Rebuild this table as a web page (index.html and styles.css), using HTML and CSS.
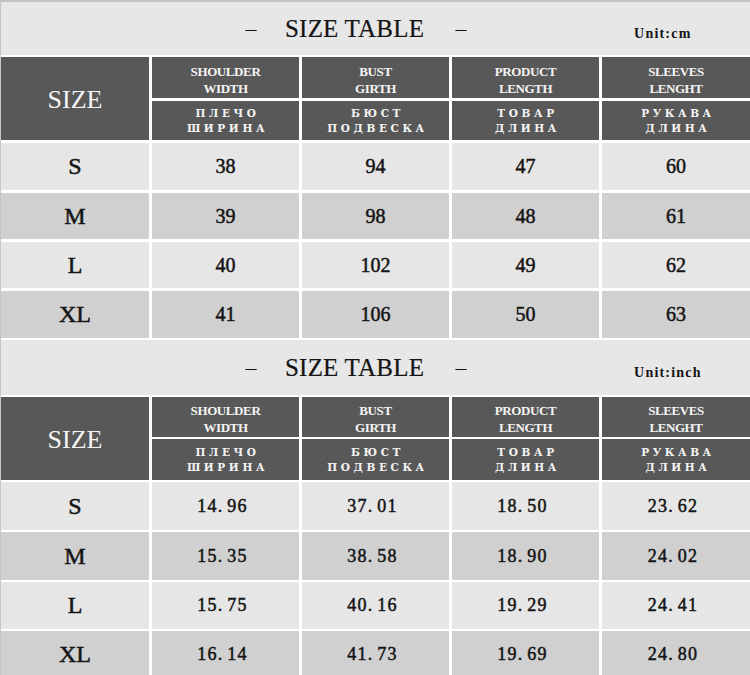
FILE: index.html
```html
<!DOCTYPE html>
<html lang="en">
<head>
<meta charset="utf-8">
<title>Size Table</title>
<link rel="stylesheet" href="styles.css">
</head>
<body>
<div class="page">
  <section class="block block-cm">
    <div class="title-row">
      <span class="dash">–</span>
      <span class="title">SIZE TABLE</span>
      <span class="dash">–</span>
      <span class="unit">Unit:cm</span>
    </div>
    <div class="grid grid-cm">
      <div class="cell head size-head">SIZE</div>
      <div class="cell head en">SHOULDER<br>WIDTH</div>
      <div class="cell head en">BUST<br>GIRTH</div>
      <div class="cell head en">PRODUCT<br>LENGTH</div>
      <div class="cell head en">SLEEVES<br>LENGHT</div>
      <div class="cell head ru">ПЛЕЧО<br>ШИРИНА</div>
      <div class="cell head ru">БЮСТ<br>ПОДВЕСКА</div>
      <div class="cell head ru">ТОВАР<br>ДЛИНА</div>
      <div class="cell head ru">РУКАВА<br>ДЛИНА</div>

      <div class="cell light size">S</div>
      <div class="cell light num">38</div>
      <div class="cell light num">94</div>
      <div class="cell light num">47</div>
      <div class="cell light num">60</div>

      <div class="cell dark size">M</div>
      <div class="cell dark num">39</div>
      <div class="cell dark num">98</div>
      <div class="cell dark num">48</div>
      <div class="cell dark num">61</div>

      <div class="cell light size">L</div>
      <div class="cell light num">40</div>
      <div class="cell light num">102</div>
      <div class="cell light num">49</div>
      <div class="cell light num">62</div>

      <div class="cell dark size">XL</div>
      <div class="cell dark num">41</div>
      <div class="cell dark num">106</div>
      <div class="cell dark num">50</div>
      <div class="cell dark num">63</div>
    </div>
  </section>

  <section class="block block-inch">
    <div class="title-row">
      <span class="dash">–</span>
      <span class="title">SIZE TABLE</span>
      <span class="dash">–</span>
      <span class="unit">Unit:inch</span>
    </div>
    <div class="grid grid-inch">
      <div class="cell head size-head">SIZE</div>
      <div class="cell head en">SHOULDER<br>WIDTH</div>
      <div class="cell head en">BUST<br>GIRTH</div>
      <div class="cell head en">PRODUCT<br>LENGTH</div>
      <div class="cell head en">SLEEVES<br>LENGHT</div>
      <div class="cell head ru">ПЛЕЧО<br>ШИРИНА</div>
      <div class="cell head ru">БЮСТ<br>ПОДВЕСКА</div>
      <div class="cell head ru">ТОВАР<br>ДЛИНА</div>
      <div class="cell head ru">РУКАВА<br>ДЛИНА</div>

      <div class="cell light size">S</div>
      <div class="cell light dec">14<span class="pt">.</span>96</div>
      <div class="cell light dec">37<span class="pt">.</span>01</div>
      <div class="cell light dec">18<span class="pt">.</span>50</div>
      <div class="cell light dec">23<span class="pt">.</span>62</div>

      <div class="cell dark size">M</div>
      <div class="cell dark dec">15<span class="pt">.</span>35</div>
      <div class="cell dark dec">38<span class="pt">.</span>58</div>
      <div class="cell dark dec">18<span class="pt">.</span>90</div>
      <div class="cell dark dec">24<span class="pt">.</span>02</div>

      <div class="cell light size">L</div>
      <div class="cell light dec">15<span class="pt">.</span>75</div>
      <div class="cell light dec">40<span class="pt">.</span>16</div>
      <div class="cell light dec">19<span class="pt">.</span>29</div>
      <div class="cell light dec">24<span class="pt">.</span>41</div>

      <div class="cell dark size">XL</div>
      <div class="cell dark dec">16<span class="pt">.</span>14</div>
      <div class="cell dark dec">41<span class="pt">.</span>73</div>
      <div class="cell dark dec">19<span class="pt">.</span>69</div>
      <div class="cell dark dec">24<span class="pt">.</span>80</div>
    </div>
  </section>
</div>
</body>
</html>
```
FILE: styles.css
```css
* { box-sizing: border-box; }

html, body {
  margin: 0;
  padding: 0;
  background: #ffffff;
}

body {
  width: 750px;
  height: 675px;
  overflow: hidden;
  font-family: "Liberation Serif", "Times New Roman", serif;
  color: #141414;
}

.page {
  display: flex;
  flex-direction: column;
  border-left: 1px solid #c6c6c6;
}

.block-cm .title-row {
  height: 55px;
  border-top: 2px solid #c2c2c2;
  margin-bottom: 2px;
}

.block-inch {
  margin-top: 2px;
}

.block-inch .title-row {
  height: 55px;
  margin-bottom: 2px;
}

.title-row {
  display: flex;
  align-items: center;
  background: #e7e7e7;
  padding-left: 244px;
}

.dash {
  font-size: 22px;
  width: 12px;
  text-align: center;
  line-height: 1;
}

.title {
  font-size: 25px;
  margin: 0 31px 0 28px;
  letter-spacing: 0.2px;
  -webkit-text-stroke: 0.2px #141414;
}

.unit {
  font-family: "Liberation Serif", "Times New Roman", serif;
  font-weight: bold;
  font-size: 14px;
  letter-spacing: 1.2px;
  margin-left: 167px;
  margin-top: 10px;
}

.grid {
  display: grid;
  grid-template-columns: 148px 147px 147px 147px 148px;
  column-gap: 3px;
  background: #ffffff;
}

.grid-cm {
  grid-template-rows: 41px 39px 47px 46px 46px 47px;
  row-gap: 3px;
}

.grid-inch {
  grid-template-rows: 40px 41px 48px 48px 47px 47px;
  row-gap: 2px;
}

.cell {
  display: flex;
  align-items: center;
  justify-content: center;
  text-align: center;
}

.head {
  background: #585858;
  color: #f4f4f4;
}

.size-head {
  grid-row: span 2;
  font-size: 26px;
  padding-top: 2px;
}

.en {
  font-family: "Liberation Serif", "Times New Roman", serif;
  font-weight: bold;
  font-size: 13px;
  line-height: 17px;
  letter-spacing: -0.4px;
  padding-top: 4px;
}

.ru {
  font-family: "DejaVu Serif", "Liberation Serif", serif;
  font-weight: bold;
  font-size: 10.5px;
  line-height: 15px;
  letter-spacing: 3.6px;
  padding-left: 4px;
}

.light { background: #e6e6e6; }
.dark { background: #d0d0d0; }

.size {
  font-size: 24px;
  -webkit-text-stroke: 0.5px #141414;
}

.num {
  font-size: 20px;
  -webkit-text-stroke: 0.5px #141414;
}

.dec {
  font-family: "Liberation Serif", "Times New Roman", serif;
  font-size: 18px;
  letter-spacing: 1.2px;
  padding-right: 6px;
  -webkit-text-stroke: 0.5px #141414;
}

.pt {
  margin-right: 4px;
}
```
